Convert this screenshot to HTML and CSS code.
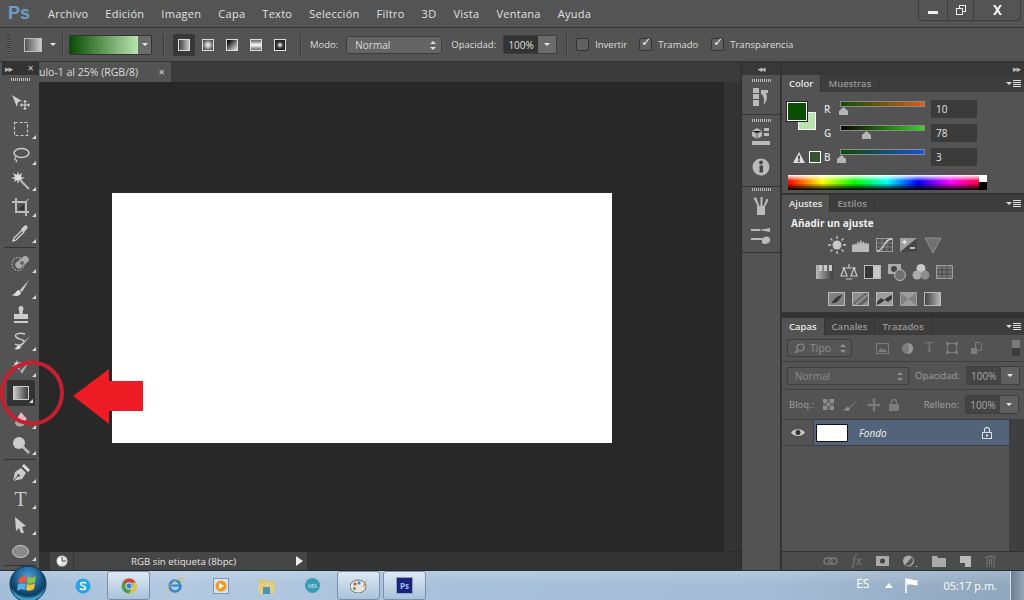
FILE: index.html
```html
<!DOCTYPE html>
<html lang="es">
<head>
    <meta charset="UTF-8">
    <title>Photoshop</title>
    <link rel="stylesheet" href="styles.css">
</head>
<body>
    <svg width="0" height="0" class="defs">
        <defs>
            <linearGradient id="grayfade"><stop offset="0" stop-color="#ccc"/><stop offset="1" stop-color="#3a3a3a"/></linearGradient>
            <radialGradient id="grayradial"><stop offset="0" stop-color="#fff"/><stop offset="1" stop-color="#555"/></radialGradient>
            <radialGradient id="darkradial"><stop offset="0" stop-color="#fff"/><stop offset=".6" stop-color="#333"/><stop offset="1" stop-color="#222"/></radialGradient>
            <linearGradient id="grayangle" x2="1" y2="1"><stop offset=".2" stop-color="#111"/><stop offset=".6" stop-color="#888"/><stop offset="1" stop-color="#eee"/></linearGradient>
            <linearGradient id="grayband" x2="0" y2="1"><stop offset="0" stop-color="#555"/><stop offset=".5" stop-color="#fff"/><stop offset="1" stop-color="#555"/></linearGradient>
            <radialGradient id="orb" cy=".3" r=".62"><stop offset="0" stop-color="#4f9fd6"/><stop offset=".6" stop-color="#1a5a8a"/><stop offset=".85" stop-color="#0d3c5e"/><stop offset="1" stop-color="#3fa3c8"/></radialGradient>
        </defs>
    </svg>

    <header class="menubar">
        <span class="ps-logo">Ps</span>
        <nav class="menu">
            <span>Archivo</span><span>Edición</span><span>Imagen</span><span>Capa</span><span>Texto</span><span>Selección</span><span>Filtro</span><span>3D</span><span>Vista</span><span>Ventana</span><span>Ayuda</span>
        </nav>
        <div class="winbtns">
            <span class="winbtn min"><i></i></span>
            <span class="winbtn restore"><svg width="12" height="12" viewBox="0 0 12 12"><path d="M4 1h7v7H8v3H1V4h3z M5 2v2h3v3h2V2z M2 5v5h5V5z" fill="#eee" fill-rule="evenodd"/></svg></span>
            <span class="winbtn close"><svg width="11" height="10" viewBox="0 0 11 10"><path d="M1 0h2.400l2.100 3 2.100-3H10L6.800 5 10 10H7.600L5.500 7 3.400 10H1l3.200-5z" fill="#eee"/></svg></span>
        </div>
    </header>

    <section class="optbar">
        <span class="grip-v"></span>
        <span class="tool-preview"></span>
        <span class="caret"></span>
        <span class="vsep sep-a"></span>
        <span class="grad-picker"><span class="grad-fill"></span><span class="grad-drop"><span class="caret"></span></span></span>
        <span class="vsep sep-b"></span>
        <div class="modes">
            <span class="mode selected"><svg width="12" height="12"><rect x=".5" y=".5" width="11" height="11" fill="url(#grayfade)" stroke="#ddd" transform="matrix(-1 0 0 1 12 0)"/></svg></span>
            <span class="mode"><svg width="12" height="12"><rect x=".5" y=".5" width="11" height="11" fill="url(#grayradial)" stroke="#ddd"/></svg></span>
            <span class="mode"><svg width="12" height="12"><rect x=".5" y=".5" width="11" height="11" fill="url(#grayangle)" stroke="#ddd"/></svg></span>
            <span class="mode"><svg width="12" height="12"><rect x=".5" y=".5" width="11" height="11" fill="url(#grayband)" stroke="#ddd"/></svg></span>
            <span class="mode"><svg width="12" height="12"><rect x=".5" y=".5" width="11" height="11" fill="url(#darkradial)" stroke="#ddd"/></svg></span>
        </div>
        <span class="vsep sep-c"></span>
        <label class="opt-label modo-label">Modo:</label>
        <span class="select modo-select">Normal<span class="updown"></span></span>
        <label class="opt-label opac-label">Opacidad:</label>
        <span class="num-drop opt-opac"><b>100%</b><em><span class="caret"></span></em></span>
        <span class="vsep sep-d"></span>
        <label class="check check-a"><i></i>Invertir</label>
        <label class="check check-b"><i class="on"></i>Tramado</label>
        <label class="check check-c"><i class="on"></i>Transparencia</label>
    </section>

    <main class="main">
        <aside class="toolbox">
            <div class="tb-head"><span class="arrows">&#9656;&#9656;</span><span class="x">&#10005;</span></div>
            <div class="tb-grip"><span class="grip-h"></span></div>
            <div class="tool plain"><svg width="20" height="18" viewBox="0 0 20 18"><path d="M1 1l10 6-4 1-1 5z" fill="#ccc"/><path d="M14 6l2 2h-1.500v2.500H17V9l2 2-2 2v-1.500h-2.500V14H16l-2 2-2-2h1.500v-2.500H11V13l-2-2 2-2v1.500h2.500V8H12z" fill="#ddd"/></svg></div>
            <div class="tool"><svg width="16" height="16" viewBox="0 0 16 16"><rect x="1.500" y="1.500" width="13" height="13" fill="none" stroke="#ccc" stroke-width="1.200" stroke-dasharray="3 2"/></svg></div>
            <div class="tool"><svg width="18" height="16" viewBox="0 0 18 16"><ellipse cx="9.500" cy="6" rx="7.500" ry="4.500" fill="none" stroke="#ccc" stroke-width="1.500"/><path d="M4 10c-2 1-1 3 0 3s1 1 0 2" fill="none" stroke="#ccc" stroke-width="1.200"/></svg></div>
            <div class="tool"><svg width="20" height="20" viewBox="0 0 20 20"><path d="M7 0l1 4 3-2-1 4 4 1-4 1 2 3-4-2-1 4-1-4-3 2 1-3-4-1 4-1-2-4 4 2z" fill="#ddd"/><path d="M9 9l9 9" stroke="#bbb" stroke-width="2"/></svg></div>
            <div class="tool"><svg width="18" height="18" viewBox="0 0 18 18"><path d="M4 0v14h13M0 4h14v14" fill="none" stroke="#bbb" stroke-width="2"/><path d="M6 12l6-6v6z" fill="#333"/><path d="M13 4l4-3" stroke="#bbb"/></svg></div>
            <div class="tool"><svg width="18" height="18" viewBox="0 0 18 18"><path d="M1 17l1-3 8-8 2 2-8 8z" fill="none" stroke="#ddd" stroke-width="1.200"/><path d="M9 5l3-3c2-2 5 1 3 3l-3 3z" fill="#ccc"/></svg></div>
            <div class="tb-sep first"></div>
            <div class="tool"><svg width="20" height="18" viewBox="0 0 20 18"><ellipse cx="7" cy="10" rx="6" ry="6.500" fill="none" stroke="#ddd" stroke-dasharray="1.500 1.500"/><rect x="4" y="5" width="15" height="7" rx="3" transform="rotate(-40 11 9)" fill="#aaa"/><circle cx="11" cy="9" r="2" fill="#666"/></svg></div>
            <div class="tool"><svg width="18" height="18" viewBox="0 0 18 18"><path d="M17 0L8 10l2 2z" fill="#ccc"/><path d="M7 10c-3 0-3 4-7 5 4 2 9 1 9-3z" fill="#ddd"/></svg></div>
            <div class="tool plain"><svg width="18" height="18" viewBox="0 0 18 18"><circle cx="9" cy="2.500" r="2.500" fill="#ccc"/><path d="M7 4h4l-.5 4H16v5H2V8h5.500zM2 15h14v2H2z" fill="#ccc"/></svg></div>
            <div class="tool"><svg width="20" height="18" viewBox="0 0 20 18"><path d="M14 2C8 0 3 2 5 5s9 2 8 5-6 4-9 2" fill="none" stroke="#ccc" stroke-width="1.500"/><path d="M19 4L9 13l1 2z" fill="#bbb"/><path d="M8 13c-2 0-2 3-5 4 3 1 7 0 7-2z" fill="#ddd"/></svg></div>
            <div class="tool"><svg width="20" height="16" viewBox="0 0 20 16"><path d="M6 1l1 3 3-1-1 3 2 1-3 1 1 3-3-2-2 2V8L1 7l3-1-1-3 2 1z" fill="#ddd"/><path d="M18 3L9 12l2 3z" fill="#aaa"/></svg></div>
            <div class="tool active"><svg width="16" height="14"><rect x=".5" y=".5" width="15" height="13" fill="url(#grayfade)" stroke="#ccc"/></svg></div>
            <div class="tool"><svg width="16" height="16" viewBox="0 0 16 16"><path d="M8 1l6 7-3 3H5L3 9z" fill="#e9b3bd"/><ellipse cx="7" cy="12" rx="5" ry="3.500" fill="#aaa"/></svg></div>
            <div class="tool"><svg width="18" height="18" viewBox="0 0 18 18"><circle cx="7" cy="7" r="6" fill="#ccc"/><path d="M11 11l6 6" stroke="#bbb" stroke-width="2.500"/></svg></div>
            <div class="tb-sep"></div>
            <div class="tool"><svg width="18" height="18" viewBox="0 0 18 18"><path d="M1 17l2-9 6-4 5 5-4 6z" fill="#ccc"/><path d="M1 17l5-5" stroke="#444"/><circle cx="6.500" cy="11.500" r="1.300" fill="#444"/><path d="M10 2l2-2 6 6-2 2z" fill="#ddd"/></svg></div>
            <div class="tool t-tool">T</div>
            <div class="tool"><svg width="14" height="18" viewBox="0 0 14 18"><path d="M1 1l11 9-4 1 2 6-3 0-2-5-3 3z" fill="#ccc"/></svg></div>
            <div class="tool"><svg width="17" height="13" viewBox="0 0 17 13"><ellipse cx="8.500" cy="6.500" rx="8" ry="6" fill="#8a8a8a" stroke="#ccc"/></svg></div>
            <div class="tb-sep"></div>
        </aside>

        <section class="doc">
            <div class="doc-tabs">
                <div class="doc-tab">ulo-1 al 25% (RGB/8)<span class="x">&#10005;</span></div>
            </div>
            <div class="doc-body">
                <div class="workspace"><div class="canvas"></div></div>
                <div class="gutter"></div>
            </div>
            <div class="status">
                <div class="status-info">
                    <span class="status-ico"><svg width="12" height="12" viewBox="0 0 12 12"><circle cx="6" cy="6" r="5.500" fill="#ddd"/><path d="M6 2v4h4" fill="none" stroke="#555"/><rect x="2" y="3" width="3" height="6" fill="#fff"/></svg></span>
                    <span class="status-text">RGB sin etiqueta (8bpc)</span>
                    <span class="status-arrow"></span>
                </div>
            </div>
        </section>

        <aside class="dock">
            <div class="collapse-bar center"><span class="arrows">&#9666;&#9666;</span></div>
            <div class="dock-group">
                <span class="grip-h"></span>
                <div class="dock-ico"><svg width="16" height="18" viewBox="0 0 16 18"><path d="M0 0h6v5H0zM0 6h6v5H0zM0 12h6v6H0z" fill="#ccc"/><path d="M8 2h7v3l-2 0c2 4 1 9-3 12 2-4 1-8-1-11l-1 1z" fill="#ccc"/></svg></div>
            </div>
            <div class="dock-group second">
                <span class="grip-h"></span>
                <div class="dock-ico"><svg width="18" height="18" viewBox="0 0 18 18"><path d="M5 0l5 3v5l-5 3-5-3V3z" fill="#ccc"/><path d="M5 5v6M0 3l5 2 5-2" stroke="#555"/><path d="M12 0h5v3h-5zM12 5h5v3h-5z" fill="#ccc"/><rect y="13" width="18" height="4" fill="#ccc"/></svg></div>
                <div class="dock-ico"><svg width="18" height="18" viewBox="0 0 18 18"><circle cx="9" cy="9" r="8.500" fill="#ccc"/><rect x="7.500" y="7.500" width="3.500" height="7" fill="#444"/><circle cx="9" cy="4.500" r="2" fill="#444"/></svg></div>
            </div>
            <div class="dock-group third">
                <span class="grip-h"></span>
                <div class="dock-ico"><svg width="16" height="18" viewBox="0 0 16 18"><path d="M4 9h8v9H4z" fill="#ccc"/><path d="M5 9L1 1l2 0 3 8M8 9V0h1v9M11 9l3-7 1 1-3 6" stroke="#ccc" fill="#ccc"/></svg></div>
                <div class="dock-ico"><svg width="20" height="18" viewBox="0 0 20 18"><path d="M0 3h9M0 12h11" stroke="#ccc" stroke-width="2"/><path d="M8 3l11-2v4z" fill="#ccc"/><path d="M11 12c3-4 9-3 8 2-1 3-6 4-8 2z" fill="#ccc"/></svg></div>
            </div>
            <div class="dock-rest"></div>
        </aside>

        <div class="panels">
            <div class="collapse-bar right"><span class="arrows">&#9656;&#9656;</span></div>

            <section class="panel color-panel">
                <div class="tabs">
                    <span class="tab on">Color</span><span class="tab">Muestras</span>
                    <span class="panel-menu"><i></i><b></b></span>
                </div>
                <div class="color-body">
                    <div class="color-top">
                        <div class="swatches"><span class="sw-bg"></span><span class="sw-fg"></span></div>
                        <div class="warn-row">
                            <svg width="12" height="11" viewBox="0 0 12 11"><path d="M6 0l6 11H0z" fill="#ddd"/><rect x="5.200" y="3.500" width="1.600" height="4" fill="#333"/><rect x="5.200" y="8.300" width="1.600" height="1.600" fill="#333"/></svg>
                            <span class="sw-web"></span>
                        </div>
                        <div class="sliders">
                            <div class="slider-row"><span class="ch">R</span><span class="track"><span class="track-line r"></span><span class="thumb th-r"></span></span><span class="num">10</span></div>
                            <div class="slider-row"><span class="ch">G</span><span class="track"><span class="track-line g"></span><span class="thumb th-g"></span></span><span class="num">78</span></div>
                            <div class="slider-row"><span class="ch">B</span><span class="track"><span class="track-line b"></span><span class="thumb th-b"></span></span><span class="num">3</span></div>
                        </div>
                    </div>
                    <div class="spectrum"><span class="sp-colors"></span><span class="sp-bw"></span></div>
                </div>
            </section>

            <section class="panel adjust-panel">
                <div class="tabs">
                    <span class="tab on">Ajustes</span><span class="tab">Estilos</span>
                    <span class="panel-menu"><i></i><b></b></span>
                </div>
                <div class="adjust-body">
                    <div class="adjust-title">Añadir un ajuste</div>
                    <div class="adj-row">
                        <svg viewBox="0 0 18 18"><circle cx="9" cy="9" r="4.500" fill="#ddd"/><path d="M9 0v3M9 15v3M0 9h3M15 9h3M2.500 2.500l2 2M13.500 13.500l2 2M2.500 15.500l2-2M13.500 4.500l2-2" stroke="#ddd" stroke-width="1.300"/></svg>
                        <svg viewBox="0 0 18 18"><path d="M0 16V9l1-1 1 1 1-2 1 2 2-4 1 3 2-5 1 5 1-3 2 3 1-2 1 2 2-1v9z" fill="#ccc"/></svg>
                        <svg viewBox="0 0 18 18"><rect x=".5" y="2.500" width="16" height="13" fill="none" stroke="#aaa"/><path d="M6 3v12M11 3v12M1 7h15M1 11h15" stroke="#888"/><path d="M1 15c8 0 6-12 15-12" fill="none" stroke="#eee" stroke-width="1.300"/></svg>
                        <svg viewBox="0 0 18 18"><rect y="2" width="17" height="14" fill="#aaa"/><path d="M0 16L17 2v14z" fill="#444"/><path d="M2 6h5M4.500 3.500v5M10 12h5" stroke="#fff" stroke-width="1.300"/></svg>
                        <svg viewBox="0 0 18 18"><path d="M1 2h16L9 17z" fill="#777" stroke="#999"/></svg>
                    </div>
                    <div class="adj-row six">
                        <svg viewBox="0 0 18 18"><rect y="2" width="17" height="14" fill="url(#grayfade)"/><path d="M3 2h3v6H3zM8 2h3v6H8zM13 2h3v6h-3z" fill="#ddd"/></svg>
                        <svg viewBox="0 0 18 18"><path d="M9 1v4M2 5h14M4 5l-3 8h6zM14 5l-3 8h6zM6 16h6" fill="none" stroke="#ddd" stroke-width="1.200"/></svg>
                        <svg viewBox="0 0 18 18"><rect x=".5" y="2.500" width="16" height="13" fill="#333" stroke="#ccc"/><rect x="9" y="3" width="7" height="12" fill="#ddd"/></svg>
                        <svg viewBox="0 0 18 18"><rect y="1" width="13" height="10" fill="#bbb"/><circle cx="6" cy="6" r="3" fill="#444"/><circle cx="12" cy="12" r="5.500" fill="#777" stroke="#ccc"/></svg>
                        <svg viewBox="0 0 18 18"><circle cx="9" cy="5.500" r="4.500" fill="#ddd"/><circle cx="5" cy="12" r="4.500" fill="#bbb"/><circle cx="13" cy="12" r="4.500" fill="#999"/></svg>
                        <svg viewBox="0 0 18 18"><rect x=".5" y="2.500" width="16" height="13" fill="#777" stroke="#aaa"/><path d="M6 3v12M11 3v12M1 7h15M1 11h15" stroke="#444"/></svg>
                    </div>
                    <div class="adj-row">
                        <svg viewBox="0 0 18 18"><rect x=".5" y="2.500" width="16" height="13" fill="#888" stroke="#ccc"/><path d="M3 13c3-2 4-7 11-8-2 3-3 7-8 8z" fill="#333"/></svg>
                        <svg viewBox="0 0 18 18"><rect x=".5" y="2.500" width="16" height="13" fill="#999" stroke="#ccc"/><path d="M1 13L13 3h3L1 15z" fill="#666"/><path d="M5 15L16 6v4l-6 5z" fill="#666"/></svg>
                        <svg viewBox="0 0 18 18"><rect x=".5" y="2.500" width="16" height="13" fill="#aaa" stroke="#ccc"/><path d="M1 12l4-4 3 2 4-3 4-2v4l-4 3-3-2-4 3-4 2z" fill="#333"/></svg>
                        <svg viewBox="0 0 18 18"><rect x=".5" y="2.500" width="16" height="13" fill="#888" stroke="#aaa"/><path d="M1 3l7.500 6L16 3zM1 15l7.500-6 7.500 6z" fill="#aaa"/></svg>
                        <svg viewBox="0 0 18 18"><rect x=".5" y="2.500" width="16" height="13" fill="url(#grayfade)" stroke="#ccc" transform="matrix(-1 0 0 1 17 0)"/></svg>
                    </div>
                </div>
            </section>

            <section class="panel layers-panel">
                <div class="tabs">
                    <span class="tab on">Capas</span><span class="tab">Canales</span><span class="tab">Trazados</span>
                    <span class="panel-menu"><i></i><b></b></span>
                </div>
                <div class="layer-row filter-row">
                    <span class="select filter-select"><svg width="11" height="11" viewBox="0 0 11 11"><circle cx="6.500" cy="4.500" r="3.500" fill="none" stroke="#8d8d8d" stroke-width="1.200"/><path d="M4 7l-3 3" stroke="#8d8d8d" stroke-width="1.400"/></svg>Tipo<span class="updown"></span></span>
                    <div class="filter-icons">
                        <svg width="13" height="11" viewBox="0 0 13 11"><rect x=".5" y=".5" width="12" height="10" fill="none" stroke="#7c7c7c"/><path d="M2 9l3-4 2 2 2-1 2 3z" fill="#7c7c7c"/></svg>
                        <svg width="11" height="11" viewBox="0 0 11 11"><circle cx="5.500" cy="5.500" r="5.500" fill="#7c7c7c"/><path d="M5.500 0a5.500 5.500 0 0 1 0 11c2-3 2-8 0-11" fill="#999"/></svg>
                        <span class="t-filter">T</span>
                        <svg width="12" height="12" viewBox="0 0 12 12"><path d="M1.500 1.500h9v9h-9z" fill="none" stroke="#7c7c7c"/><path d="M0 0h3v3H0zM9 0h3v3H9zM0 9h3v3H0zM9 9h3v3H9z" fill="#7c7c7c"/></svg>
                        <svg width="11" height="12" viewBox="0 0 11 12"><path d="M4.500.5h4l2 2v6h-6z" fill="none" stroke="#7c7c7c"/><rect y="6" width="6" height="6" fill="#7c7c7c"/></svg>
                    </div>
                    <span class="filter-toggle"></span>
                </div>
                <div class="layer-row blend-row">
                    <span class="select blend-select">Normal<span class="updown"></span></span>
                    <span class="dim-label">Opacidad:</span>
                    <span class="num-drop small"><b>100%</b><em><span class="caret"></span></em></span>
                </div>
                <div class="layer-row lock-row">
                    <span class="dim-label bloq">Bloq.:</span>
                    <div class="lock-icons">
                        <svg width="11" height="11" viewBox="0 0 11 11"><rect width="11" height="11" fill="#666"/><path d="M0 0h4v4H0zM7 0h4v4H7zM4 4h3v3H4zM0 7h4v4H0zM7 7h4v4H7z" fill="#8d8d8d"/></svg>
                        <svg width="17" height="12" viewBox="0 0 17 12"><path d="M17 0L7 8l1 1z" fill="#7c7c7c"/><path d="M6 8c-2 0-2 2-5 3 3 1 7 1 7-1z" fill="#8d8d8d"/></svg>
                        <svg width="14" height="14" viewBox="0 0 14 14"><path d="M7 0l2 2.500H8V6h3.500V5L14 7l-2.500 2V8H8v3.500h1L7 14l-2-2.500h1V8H2.500v1L0 7l2.500-2v1H6V2.500H5z" fill="#7c7c7c"/></svg>
                        <svg width="10" height="12" viewBox="0 0 10 12"><rect y="5" width="10" height="7" fill="#7c7c7c"/><path d="M2.500 5V3a2.500 2.500 0 0 1 5 0v2" fill="none" stroke="#7c7c7c" stroke-width="1.300"/></svg>
                    </div>
                    <span class="dim-label relleno">Relleno:</span>
                    <span class="num-drop small"><b>100%</b><em><span class="caret"></span></em></span>
                </div>
                <div class="layer-list">
                    <div class="layer-items">
                        <div class="layer">
                            <span class="eye"><svg width="14" height="9" viewBox="0 0 14 9"><path d="M0 4.500C3 0 11 0 14 4.500 11 9 3 9 0 4.500z" fill="#ccc"/><circle cx="7" cy="4.500" r="2.500" fill="#333"/></svg></span>
                            <div class="layer-main">
                                <span class="thumbnail"></span>
                                <span class="layer-name">Fondo</span>
                                <svg class="layer-lock" width="10" height="12" viewBox="0 0 10 12"><rect x=".5" y="5.500" width="9" height="6" fill="none" stroke="#ddd"/><path d="M2.500 5V3a2.500 2.500 0 0 1 5 0v2" fill="none" stroke="#ddd" stroke-width="1.200"/><rect x="4" y="7.500" width="2" height="2" fill="#ddd"/></svg>
                            </div>
                        </div>
                    </div>
                    <div class="layer-scroll"></div>
                </div>
                <div class="layers-foot">
                    <svg width="15" height="8" viewBox="0 0 15 8"><rect x="1" y="1" width="8" height="6" rx="3" fill="none" stroke="#777" stroke-width="1.500"/><rect x="6" y="1" width="8" height="6" rx="3" fill="none" stroke="#777" stroke-width="1.500"/></svg>
                    <span class="fx">fx</span>
                    <svg width="13" height="10" viewBox="0 0 13 10"><rect width="13" height="10" fill="#aaa"/><circle cx="6.500" cy="5" r="2.500" fill="#444"/></svg>
                    <svg width="15" height="12" viewBox="0 0 15 12"><circle cx="5.500" cy="6" r="5.500" fill="#aaa"/><path d="M2 10L9 2a5.500 5.500 0 0 1-7 8z" fill="#555"/><path d="M12 11h3l-1.500 1z" fill="#ccc"/></svg>
                    <svg width="14" height="11" viewBox="0 0 14 11"><path d="M0 0h5l1 2h8v9H0z" fill="#aaa"/></svg>
                    <svg width="11" height="12" viewBox="0 0 11 12"><path d="M0 1h11v11H5L0 8z" fill="#bbb"/><path d="M0 8h5v4z" fill="#444"/></svg>
                    <svg width="11" height="12" viewBox="0 0 11 12"><path d="M0 2h11M4 2V0h3v2M2 3v9h7V3M4.500 4v6M6.500 4v6" fill="none" stroke="#777"/></svg>
                </div>
            </section>
        </div>
    </main>

    <footer class="taskbar">
        <div class="task-apps">
            <span class="task-slot skype"><svg width="16" height="16" viewBox="0 0 16 16"><circle cx="8" cy="8" r="7.500" fill="#22a6e8"/><path d="M11 5.500C10 4 5.500 4 5.500 6c0 2 5 1.500 5 4 0 2-4.500 2-5.500.5" fill="none" stroke="#fff" stroke-width="1.500"/></svg></span>
            <span class="task-slot open chrome"><svg width="16" height="16" viewBox="0 0 16 16"><circle cx="8" cy="8" r="7.500" fill="#4b9e4a"/><path d="M8 .5A7.500 7.500 0 0 1 14.500 4.500H8a3.500 3.500 0 0 0-3.200 2L2.200 3.400A7.500 7.500 0 0 1 8 .5z" fill="#d8413a"/><path d="M14.500 4.500A7.500 7.500 0 0 1 8 15.500L11 10a3.500 3.500 0 0 0 0-5.500z" fill="#f0c23b"/><circle cx="8" cy="8" r="3.200" fill="#3d7fd0" stroke="#eee"/></svg></span>
            <span class="task-slot ie"><svg width="18" height="18" viewBox="0 0 18 18"><circle cx="9" cy="9" r="5.500" fill="none" stroke="#2f86c8" stroke-width="2.500"/><path d="M4 8.500h10" stroke="#2f86c8" stroke-width="2"/><path d="M1 16C0 11 9 2 16 1c2 2-1 5-2 6" fill="none" stroke="#e9b93a" stroke-width="1"/></svg></span>
            <span class="task-slot wmp"><svg width="16" height="16" viewBox="0 0 16 16"><rect x=".5" y=".5" width="15" height="15" fill="#d9e4ee" stroke="#7c98b3"/><circle cx="8" cy="8" r="5.500" fill="#f09a1f"/><path d="M6 5l5 3-5 3z" fill="#fff"/></svg></span>
            <span class="task-slot folder"><svg width="17" height="16" viewBox="0 0 17 16"><path d="M1 1h6l1 2h8v2H1z" fill="#d8c777"/><path d="M0 5h17l-1 11H1z" fill="#e0cf7e"/><path d="M5 9h7v7H5z" fill="#4f91b0"/></svg></span>
            <span class="task-slot kbs"><span class="kbs-ball">KBS</span></span>
            <span class="task-slot open paint"><svg width="18" height="15" viewBox="0 0 18 15"><ellipse cx="8" cy="8.500" rx="8" ry="6.500" fill="#e8e4dc" stroke="#777"/><circle cx="5" cy="6" r="1.500" fill="#c94b4b"/><circle cx="9" cy="5" r="1.500" fill="#4b80c9"/><circle cx="4.500" cy="10.500" r="1.500" fill="#5ba34f"/><path d="M17 0l-4 8 1 1z" fill="#c08b3c"/></svg></span>
            <span class="task-slot open ps-task"><span class="ps-tile">Ps</span></span>
        </div>
        <div class="tray">
            <span class="lang">ES</span>
            <span class="tray-up"></span>
            <svg width="16" height="16" viewBox="0 0 16 16"><path d="M2 0v15" stroke="#fff" stroke-width="1.500"/><path d="M3 1c4-1 5 2 11 1-1 3-1 3 0 5-6 1-7-2-11 0z" fill="#fff"/></svg>
            <span class="clock">05:17 p.m.</span>
        </div>
        <span class="show-desktop"></span>
    </footer>

    <!-- start orb sits over the status bar -->
    <svg class="start-orb" width="38" height="38" viewBox="0 0 38 38">
        <circle cx="19" cy="19" r="18" fill="url(#orb)" stroke="#0d3552"/>
        <path d="M10 13c3-2 5-2 8-1l-1 6c-3-1-5-1-8 0z" fill="#e8573a"/>
        <path d="M19 12c3 1 5 1 8-1l-1 6c-3 2-5 2-8 1z" fill="#8cc63f"/>
        <path d="M9 19c3-1 5-1 8 0l-1 6c-3-1-5-1-8 1z" fill="#5aaee8"/>
        <path d="M18 19c3 1 5 1 8-1l-1 6c-3 2-5 2-8 1z" fill="#f4c430"/>
    </svg>

    <!-- red marks drawn over the screenshot -->
    <svg class="annotation" width="150" height="70" viewBox="0 0 150 70">
        <ellipse cx="32" cy="33" rx="30" ry="30.500" fill="none" stroke="#c6202e" stroke-width="4"/>
        <path d="M73 36l36-27v12h34v30h-34v13z" fill="#ed1c24"/>
    </svg>
</body>
</html>
```

FILE: styles.css
```css
html, body {
    margin: 0;
    height: 100%;
}
body {
    position: relative;
    width: 1024px;
    height: 600px;
    overflow: hidden;
    display: flex;
    flex-direction: column;
    background-color: #535353;
    color: #d8d8d8;
    font-family: "Open Sans", "Noto Sans", sans-serif;
    font-size: 10px;
}
.defs {
    position: absolute;
}
svg {
    display: block;
    flex: none;
}

/* menu bar */
.menubar {
    height: 27px;
    flex: none;
    display: flex;
    align-items: center;
    border-bottom: 1px solid #333333;
    background-color: #545454;
}
.ps-logo {
    width: 48px;
    padding-left: 8px;
    box-sizing: border-box;
    color: #6f9dc4;
    font-size: 18px;
    font-weight: 700;
    font-family: "Liberation Sans", sans-serif;
}
.menu {
    display: flex;
    gap: 17px;
    font-size: 11px;
    letter-spacing: 0.28px;
    color: #e0e0e0;
}
.winbtns {
    margin-left: auto;
    margin-right: 3px;
    align-self: flex-start;
    display: flex;
    height: 20px;
    border: 1px solid #3c3c3c;
    border-top: 0;
    border-radius: 0 0 4px 4px;
}
.winbtn {
    display: flex;
    align-items: center;
    justify-content: center;
    border-right: 1px solid #3c3c3c;
}
.winbtn.min {
    width: 28px;
}
.winbtn.min i {
    width: 10px;
    height: 3px;
    margin-top: 4px;
    background-color: #eeeeee;
}
.winbtn.restore {
    width: 25px;
}
.winbtn.close {
    width: 46px;
    border-right: 0;
}

/* options bar */
.optbar {
    height: 33px;
    flex: none;
    position: relative;
    display: flex;
    align-items: center;
    border-bottom: 1px solid #333333;
    background-color: #535353;
}
.grip-v {
    width: 3px;
    height: 20px;
    margin-left: 7px;
    background: repeating-linear-gradient(#2e2e2e 0 1px, #6a6a6a 1px 2px);
}
.grip-h {
    display: block;
    width: 19px;
    height: 3px;
    background: repeating-linear-gradient(90deg, #bbbbbb 0 1px, #555555 1px 2px);
}
.tool-preview {
    width: 16px;
    height: 12px;
    margin-left: 14px;
    border: 1px solid #bbbbbb;
    background: linear-gradient(90deg, #555555, #cccccc);
}
.caret {
    display: inline-block;
    width: 0;
    height: 0;
    border: 3px solid transparent;
    border-top: 3px solid #e8e8e8;
    border-bottom: 0;
}
.tool-preview + .caret {
    margin-left: 8px;
}
.vsep {
    width: 1px;
    height: 22px;
    background-color: #3b3b3b;
    border-right: 1px solid #5f5f5f;
}
.sep-a {
    margin-left: 6px;
}
.grad-picker {
    display: flex;
    height: 18px;
    margin-left: 5px;
    border: 1px solid #333333;
    border-radius: 2px;
}
.grad-fill {
    width: 68px;
    background: linear-gradient(90deg, #0a4e03, #b9e4ae);
}
.grad-drop {
    width: 13px;
    display: flex;
    align-items: center;
    justify-content: center;
    background-color: #6b6b6b;
}
.sep-b {
    margin-left: 11px;
}
.modes {
    display: flex;
    margin-left: 8px;
}
.mode {
    width: 22px;
    height: 22px;
    margin-right: 2px;
    display: flex;
    align-items: center;
    justify-content: center;
}
.mode.selected {
    background-color: #383838;
    border-radius: 2px;
}
.sep-c {
    margin-left: 7px;
}
.opt-label {
    color: #dddddd;
    font-size: 9.500px;
}
.modo-label {
    margin-left: 8px;
}
.select {
    position: relative;
    display: flex;
    align-items: center;
    box-sizing: border-box;
    height: 18px;
    padding-left: 8px;
    border: 1px solid #3d3d3d;
    border-radius: 2px;
    background-color: #646464;
    color: #dddddd;
}
.updown {
    position: absolute;
    right: 5px;
    top: 4px;
    width: 0;
    height: 0;
    border: 3px solid transparent;
    border-bottom: 3px solid #dddddd;
    border-top: 0;
}
.updown::after {
    content: "";
    position: absolute;
    left: -3px;
    top: 6px;
    width: 0;
    height: 0;
    border: 3px solid transparent;
    border-top: 3px solid #dddddd;
    border-bottom: 0;
}
.modo-select {
    width: 96px;
    margin-left: 8px;
}
.opac-label {
    margin-left: 9px;
}
.num-drop {
    display: flex;
    box-sizing: border-box;
    border: 1px solid #3d3d3d;
    border-radius: 2px;
}
.num-drop b {
    flex: 1;
    display: flex;
    align-items: center;
    justify-content: center;
    background-color: #333333;
    font-weight: 400;
    color: #e0e0e0;
}
.num-drop em {
    width: 18px;
    display: flex;
    align-items: center;
    justify-content: center;
    background-color: #6b6b6b;
}
.opt-opac {
    width: 54px;
    height: 19px;
    margin-left: 7px;
}
.sep-d {
    margin-left: 9px;
}
.check {
    display: flex;
    align-items: center;
    gap: 6px;
    color: #dddddd;
    font-size: 9.500px;
}
.check i {
    position: relative;
    box-sizing: border-box;
    width: 13px;
    height: 13px;
    border: 1px solid #333333;
    border-radius: 2px;
    background-color: #606060;
}
.check i.on::after {
    content: "\2713";
    position: absolute;
    left: 1px;
    top: -4px;
    color: #f2f2f2;
    font-family: "DejaVu Sans", sans-serif;
    font-size: 12px;
    font-style: normal;
    line-height: 15px;
}
.check-a {
    margin-left: 8px;
}
.check-b {
    margin-left: 12px;
}
.check-c {
    margin-left: 13px;
}

/* main area */
.main {
    flex: 1;
    display: flex;
    min-height: 0;
}

/* tools */
.toolbox {
    width: 37px;
    margin-left: 2px;
    flex: none;
    overflow: hidden;
    background-color: #535353;
}
.tb-head {
    height: 13px;
    display: flex;
    align-items: center;
    justify-content: space-between;
    padding: 0 5px 0 3px;
    background-color: #333333;
    color: #cccccc;
}
.arrows {
    font-family: "DejaVu Sans", sans-serif;
    font-size: 9px;
    letter-spacing: -1px;
    color: #bbbbbb;
}
.x {
    font-family: "DejaVu Sans", sans-serif;
    font-size: 8px;
}
.tb-grip {
    height: 15px;
    display: flex;
    justify-content: center;
    padding-top: 3px;
    box-sizing: border-box;
}
.tool {
    position: relative;
    height: 26px;
    display: flex;
    align-items: center;
    justify-content: center;
}
.tool::after {
    content: "";
    position: absolute;
    right: 3px;
    bottom: 3px;
    width: 0;
    height: 0;
    border-left: 4px solid transparent;
    border-bottom: 4px solid #dddddd;
}
.tool.plain::after {
    display: none;
}
.tool.active {
    margin: 0 4px 0 5px;
    border-radius: 2px;
    background-color: #333333;
}
.tool.active::after {
    right: 2px;
}
.t-tool {
    color: #cccccc;
    font-family: "Liberation Serif", serif;
    font-size: 20px;
}
.tb-sep {
    height: 1px;
    margin: 1px 3px 0;
    background-color: #333333;
}
.tb-sep.first {
    margin-bottom: 2px;
}

/* document */
.doc {
    flex: 1;
    min-width: 0;
    display: flex;
    flex-direction: column;
    background-color: #282828;
}
.doc-tabs {
    height: 20px;
    flex: none;
    background-color: #3a3a3a;
}
.doc-tab {
    width: 132px;
    height: 20px;
    display: flex;
    align-items: center;
    justify-content: space-between;
    box-sizing: border-box;
    padding-right: 6px;
    background-color: #535353;
    color: #dddddd;
    font-size: 10.500px;
    white-space: nowrap;
}
.doc-body {
    flex: 1;
    display: flex;
    min-height: 0;
}
.workspace {
    flex: 1;
    padding: 111px 0 0 73px;
}
.canvas {
    width: 500px;
    height: 250px;
    background-color: #ffffff;
}
.gutter {
    width: 17px;
    background-color: #333333;
}
.status {
    height: 19px;
    flex: none;
    display: flex;
    padding-left: 11px;
    background-color: #333333;
    border-top: 1px solid #2a2a2a;
    box-sizing: border-box;
}
.status-info {
    width: 257px;
    display: flex;
    align-items: center;
    background-color: #454545;
}
.status-ico {
    width: 23px;
    height: 100%;
    display: flex;
    align-items: center;
    justify-content: center;
    border-right: 1px solid #333333;
}
.status-text {
    margin-left: 57px;
    color: #e4e4e4;
    font-size: 9.700px;
    white-space: nowrap;
}
.status-arrow {
    width: 0;
    height: 0;
    margin-left: auto;
    margin-right: 4px;
    border: 5px solid transparent;
    border-left: 7px solid #eeeeee;
    border-right: 0;
}

/* dock strip */
.dock {
    width: 41px;
    flex: none;
    display: flex;
    flex-direction: column;
    background-color: #535353;
    border-left: 1px solid #2c2c2c;
    border-right: 2px solid #333333;
    box-sizing: border-box;
}
.collapse-bar {
    height: 13px;
    flex: none;
    display: flex;
    align-items: center;
    background-color: #383838;
}
.collapse-bar.center {
    justify-content: center;
}
.collapse-bar.right {
    justify-content: flex-end;
    padding-right: 4px;
}
.dock-group {
    display: flex;
    flex-direction: column;
    align-items: center;
    padding: 4px 0 2px;
    border-bottom: 1px solid #333333;
}
.dock-group.second {
    padding-bottom: 4px;
}
.dock-group.third {
    padding: 1px 0;
}
.dock-ico {
    height: 30px;
    display: flex;
    align-items: center;
    opacity: 0.85;
}
.dock-rest {
    flex: 1;
}

/* panels */
.panels {
    width: 242px;
    flex: none;
    display: flex;
    flex-direction: column;
    background-color: #333333;
}
.panel {
    display: flex;
    flex-direction: column;
    background-color: #535353;
}
.tabs {
    height: 17px;
    flex: none;
    position: relative;
    display: flex;
    align-items: stretch;
    background-color: #3d3d3d;
}
.tab {
    display: flex;
    align-items: center;
    padding: 0 7px;
    border-right: 1px solid #333333;
    color: #989898;
    font-size: 9.500px;
    font-weight: 600;
}
.tab.on {
    background-color: #535353;
    color: #e8e8e8;
}
.panel-menu {
    position: absolute;
    right: 3px;
    top: 5px;
    display: flex;
    align-items: center;
    gap: 1px;
}
.panel-menu i {
    width: 0;
    height: 0;
    border: 3px solid transparent;
    border-top: 3px solid #dddddd;
    border-bottom: 0;
}
.panel-menu b {
    width: 8px;
    height: 7px;
    background: repeating-linear-gradient(#dddddd 0 1px, #3d3d3d 1px 2px);
}

/* color panel */
.color-panel {
    height: 118px;
    margin-bottom: 2px;
}
.color-body {
    flex: 1;
    display: flex;
    flex-direction: column;
    padding: 8px 0 0 6px;
}
.color-top {
    position: relative;
    height: 75px;
}
.swatches {
    position: absolute;
    left: -1px;
    top: 2px;
    width: 30px;
    height: 29px;
}
.sw-fg, .sw-bg {
    position: absolute;
    box-sizing: border-box;
    border: 1px solid #ffffff;
}
.sw-fg {
    left: 0;
    top: 0;
    width: 20px;
    height: 19px;
    background-color: #0a4e03;
    outline: 1px solid #222222;
}
.sw-bg {
    left: 11px;
    top: 10px;
    width: 18px;
    height: 18px;
    background-color: #b9e4ae;
}
.warn-row {
    position: absolute;
    left: 5px;
    top: 51px;
    display: flex;
    align-items: center;
    gap: 4px;
}
.sw-web {
    width: 12px;
    height: 12px;
    box-sizing: border-box;
    border: 1px solid #ffffff;
    background-color: #33562f;
}
.sliders {
    margin-left: 36px;
    display: flex;
    flex-direction: column;
    gap: 6px;
}
.slider-row {
    height: 18px;
    display: flex;
    align-items: flex-start;
}
.ch {
    width: 16px;
    margin-top: 2px;
    color: #dddddd;
    font-size: 10px;
    font-weight: 600;
}
.track {
    position: relative;
    width: 85px;
    height: 18px;
}
.track-line {
    display: block;
    box-sizing: border-box;
    height: 6px;
    margin-top: 1px;
    border: 1px solid #8a8a8a;
}
.track-line.r {
    background: linear-gradient(90deg, #0a4e03, #d85e1c);
}
.track-line.g {
    background: linear-gradient(90deg, #0a0003, #3ed12c);
}
.track-line.b {
    background: linear-gradient(90deg, #0a4e00, #1a50d8);
}
.thumb {
    position: absolute;
    top: 7px;
    width: 9px;
    height: 8px;
    background-color: #b5b5b5;
    clip-path: polygon(50% 0, 100% 50%, 100% 100%, 0 100%, 0 50%);
}
.th-r {
    left: -1px;
}
.th-g {
    left: 22px;
}
.th-b {
    left: -3px;
}
.num {
    width: 46px;
    height: 18px;
    margin-left: 6px;
    padding-left: 5px;
    box-sizing: border-box;
    display: flex;
    align-items: center;
    background-color: #3b3b3b;
    color: #e6e6e6;
    font-size: 10px;
}
.spectrum {
    display: flex;
    width: 199px;
    height: 15px;
}
.sp-colors {
    flex: 1;
    background:
        linear-gradient(#ffffff, transparent 40%),
        linear-gradient(transparent 55%, #000000),
        linear-gradient(90deg, #ff0000, #ffff00 18%, #00ff00 35%, #00ffff 52%, #0000ff 68%, #ff00ff 85%, #ff0040);
}
.sp-bw {
    width: 8px;
    background: linear-gradient(#ffffff 50%, #000000 50%);
}

/* adjustments panel */
.adjust-panel {
    height: 117px;
    margin-bottom: 6px;
}
.adjust-body {
    flex: 1;
}
.adjust-title {
    padding: 4px 0 0 9px;
    height: 19px;
    box-sizing: border-box;
    color: #eeeeee;
    font-size: 10px;
    font-weight: 700;
}
.adj-row {
    height: 27px;
    display: flex;
    justify-content: center;
    align-items: center;
    gap: 6px;
    padding-right: 36px;
}
.adj-row svg {
    width: 18px;
    height: 18px;
    opacity: 0.85;
}

/* layers panel */
.layers-panel {
    flex: 1;
    min-height: 0;
}
.layer-row {
    display: flex;
    align-items: center;
    box-sizing: border-box;
    border-bottom: 1px solid #3f3f3f;
    padding-left: 5px;
}
.filter-row {
    height: 27px;
}
.filter-select {
    width: 65px;
    gap: 5px;
    padding-left: 6px;
    background-color: #565656;
    color: #8d8d8d;
    font-size: 10.500px;
}
.filter-select .updown {
    border-bottom-color: #8d8d8d;
}
.filter-select .updown::after {
    border-top-color: #8d8d8d;
}
.filter-icons {
    display: flex;
    align-items: center;
    gap: 12.500px;
    margin-left: 24px;
}
.t-filter {
    color: #7c7c7c;
    font-family: "Liberation Serif", serif;
    font-size: 14px;
    line-height: 14px;
}
.filter-toggle {
    width: 8px;
    height: 16px;
    margin-left: auto;
    margin-right: 4px;
    background: linear-gradient(#7a7a7a 50%, #3c3c3c 50%);
}
.blend-row {
    height: 28px;
}
.blend-select {
    width: 122px;
    background-color: #565656;
    color: #8d8d8d;
    padding-left: 7px;
}
.blend-select .updown {
    border-bottom-color: #8d8d8d;
}
.blend-select .updown::after {
    border-top-color: #8d8d8d;
}
.dim-label {
    color: #a0a0a0;
    font-size: 9.500px;
    margin-left: 6px;
}
.num-drop.small {
    width: 54px;
    height: 19px;
    margin-left: 6px;
}
.num-drop.small b {
    background-color: #444444;
    color: #a8a8a8;
}
.num-drop.small em {
    background-color: #5f5f5f;
}
.lock-row {
    height: 30px;
}
.bloq {
    margin-left: 2px;
}
.lock-icons {
    display: flex;
    align-items: center;
    gap: 8px;
    margin-left: 9px;
}
.relleno {
    margin-left: auto;
}
.lock-row .num-drop.small {
    margin-right: 5px;
}
.layer-list {
    flex: 1;
    display: flex;
    min-height: 0;
    border-bottom: 1px solid #333333;
}
.layer-items {
    flex: 1;
}
.layer {
    height: 25px;
    display: flex;
    border-bottom: 1px solid #3f3f3f;
}
.eye {
    width: 31px;
    display: flex;
    align-items: center;
    justify-content: center;
    border-right: 1px solid #3f3f3f;
}
.layer-main {
    flex: 1;
    display: flex;
    align-items: center;
    padding-left: 2px;
    background-color: #53647a;
}
.thumbnail {
    width: 30px;
    height: 16px;
    background-color: #ffffff;
    border: 1px solid #111111;
}
.layer-name {
    margin-left: 11px;
    color: #eeeeee;
    font-size: 10px;
    font-style: italic;
}
.layer-lock {
    margin-left: auto;
    margin-right: 17px;
}
.layer-scroll {
    width: 15px;
    background-color: #3f3f3f;
}
.layers-foot {
    height: 18px;
    flex: none;
    display: flex;
    align-items: center;
    justify-content: flex-end;
    gap: 14px;
    padding-right: 28px;
    background-color: #4c4c4c;
}
.fx {
    color: #777777;
    font-family: "Liberation Serif", serif;
    font-size: 14px;
    font-style: italic;
    line-height: 14px;
}

/* windows taskbar */
.taskbar {
    height: 30px;
    flex: none;
    display: flex;
    align-items: center;
    border-top: 1px solid #22303c;
    box-sizing: border-box;
    background:
        linear-gradient(rgba(255, 255, 255, 0.18), rgba(255, 255, 255, 0) 50%),
        linear-gradient(90deg, #a4bdd8, #b3c9e0 18%, #a8c0da 45%, #a5bcd6 75%, #8fa5bb 100%);
}
.task-apps {
    display: flex;
    height: 100%;
    padding-left: 61px;
    gap: 3px;
}
.task-slot {
    width: 43px;
    height: 100%;
    box-sizing: border-box;
    display: flex;
    align-items: center;
    justify-content: center;
}
.task-slot.open {
    border: 1px solid #7d90a5;
    border-radius: 3px;
    background: linear-gradient(#dfe9f3, #a9c2da);
}
.kbs-ball {
    width: 15px;
    height: 15px;
    display: flex;
    align-items: center;
    justify-content: center;
    border-radius: 50%;
    background-color: #3b9db4;
    color: #d8eef5;
    font-size: 5px;
}
.ps-tile {
    width: 15px;
    height: 15px;
    display: flex;
    align-items: center;
    justify-content: center;
    background-color: #1a237a;
    border: 1px solid #8ea0c8;
    color: #9fc2ea;
    font-size: 8px;
    font-weight: 700;
}
.tray {
    margin-left: auto;
    display: flex;
    align-items: center;
    color: #ffffff;
}
.lang {
    font-size: 12px;
    margin-top: -4px;
}
.tray-up {
    width: 0;
    height: 0;
    margin: 0 11px 0 16px;
    border: 4px solid transparent;
    border-bottom: 5px solid #ffffff;
    border-top: 0;
}
.clock {
    margin: 0 13px 0 23px;
    font-size: 11px;
    white-space: nowrap;
}
.show-desktop {
    width: 14px;
    height: 100%;
    background: linear-gradient(90deg, #6c7f90, #94a8ba);
    border-left: 1px solid #d5e0ea;
    box-sizing: border-box;
}

/* overlays */
.start-orb {
    position: absolute;
    left: 9px;
    top: 565px;
}
.annotation {
    position: absolute;
    left: 0;
    top: 360px;
}
```
